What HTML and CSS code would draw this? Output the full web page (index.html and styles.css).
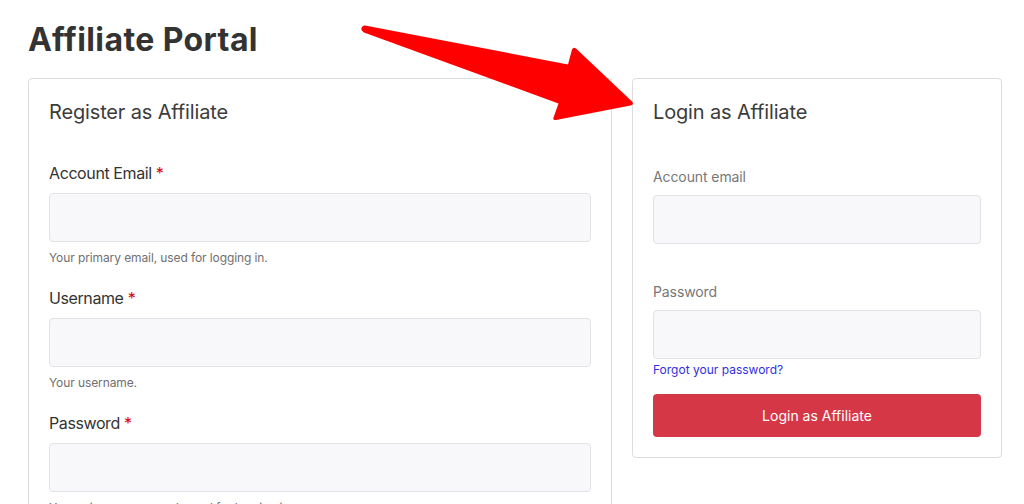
FILE: index.html
```html
<!DOCTYPE html>
<html lang="en">
<head>
<meta charset="utf-8">
<title>Affiliate Portal</title>
<link rel="stylesheet" href="styles.css">
</head>
<body>
<div class="page">
  <h1 class="title">Affiliate Portal</h1>
  <div class="columns">
    <section class="card">
      <h2 class="card-title">Register as Affiliate</h2>
      <div class="field">
        <label class="label">Account Email <span class="req">*</span></label>
        <div class="input"></div>
        <p class="help">Your primary email, used for logging in.</p>
      </div>
      <div class="field">
        <label class="label">Username <span class="req">*</span></label>
        <div class="input"></div>
        <p class="help">Your username.</p>
      </div>
      <div class="field">
        <label class="label">Password <span class="req">*</span></label>
        <div class="input"></div>
        <p class="help">Your primary password, used for logging in.</p>
      </div>
    </section>
    <section class="card card-login">
      <h2 class="card-title">Login as Affiliate</h2>
      <div class="login-field first">
        <label class="label-muted">Account email</label>
        <div class="input input-login"></div>
      </div>
      <div class="login-field last">
        <label class="label-muted">Password</label>
        <div class="input input-login"></div>
      </div>
      <a class="forgot" href="#">Forgot your password?</a>
      <button class="btn" type="button">Login as Affiliate</button>
    </section>
  </div>
  <svg class="arrow" width="300" height="110" viewBox="0 0 300 110" aria-hidden="true">
    <path d="M7 7.5 L210 46.5 L214 31.5 Q215.5 28.5 218 30.5 L274 83.5 Q276.5 86.5 272.5 87.5 L198 102 Q194.5 102.5 195.5 99.5 L200.5 85.5 L6 14.5 Q2.5 12.5 3.5 10 Q4.5 7 7 7.5 Z" fill="#ff0000"/>
  </svg>
</div>
</body>
</html>
```

FILE: styles.css
```css
* { box-sizing: border-box; }
html, body { margin: 0; padding: 0; background: #fff; }
body {
  font-family: Inter, "Noto Sans", "Liberation Sans", sans-serif;
  color: #333;
  overflow: hidden;
}
.page {
  position: relative;
  padding: 20px 0 0 28px;
}
.title {
  margin: 0;
  font-size: 32px;
  line-height: 40px;
  font-weight: 700;
  color: #333;
  letter-spacing: 0.4px;
}
.columns {
  display: grid;
  grid-template-columns: 584px 370px;
  column-gap: 20px;
  margin-top: 18px;
  align-items: start;
}
.card {
  border: 1px solid #dcdcde;
  border-radius: 4px;
  padding: 20px;
  background: #fff;
}
.card-title {
  margin: 0 0 36px;
  font-size: 20px;
  line-height: 26px;
  font-weight: 400;
  color: #3c3c3c;
  letter-spacing: -0.15px;
}
.field { margin-bottom: 20px; }
.label {
  display: block;
  font-size: 16px;
  line-height: 24px;
  color: #333;
  letter-spacing: -0.4px;
}
.req { color: #e00000; }
.input {
  margin-top: 8px;
  height: 49px;
  background: #f8f8fa;
  border: 1px solid #e2e2e6;
  border-radius: 4px;
}
.help {
  margin: 8px 0 0;
  font-size: 12px;
  line-height: 16px;
  color: #707070;
  letter-spacing: -0.1px;
}
.card-login .card-title { margin-bottom: 42px; }
.login-field.first { margin-bottom: 38px; }
.label-muted {
  display: block;
  font-size: 14px;
  line-height: 20px;
  color: #777;
  letter-spacing: -0.1px;
}
.forgot {
  display: block;
  margin-top: 3px;
  font-size: 12px;
  line-height: 16px;
  color: #2f2fe0;
  text-decoration: none;
}
.btn {
  display: block;
  width: 100%;
  margin-top: 16px;
  height: 43px;
  border: none;
  border-radius: 4px;
  background: #d63747;
  color: #fff;
  font-family: inherit;
  font-size: 14px;
}
.arrow {
  position: absolute;
  left: 358px;
  top: 18px;
}
```
